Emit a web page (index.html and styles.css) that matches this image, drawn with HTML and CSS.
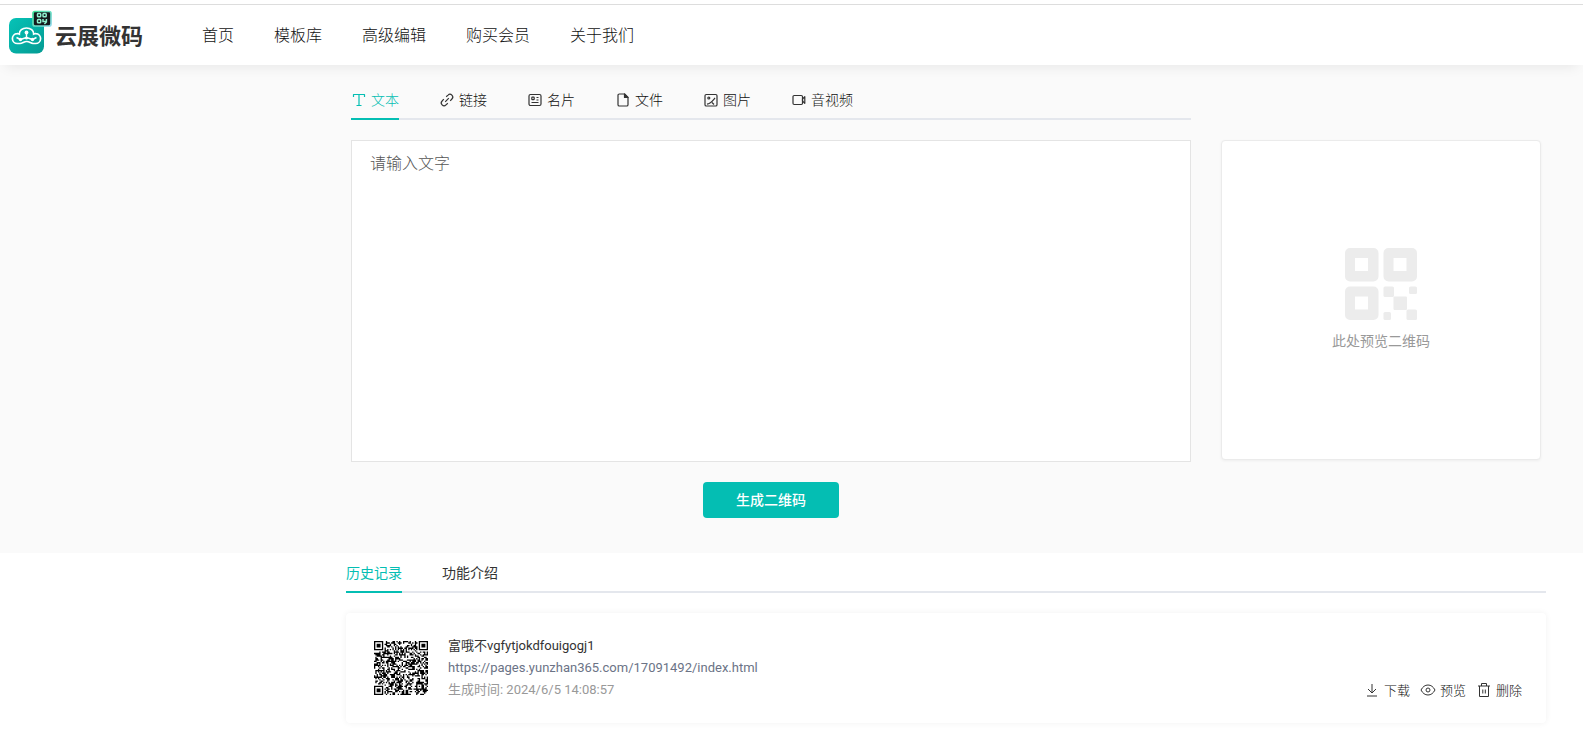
FILE: index.html
```html
<!DOCTYPE html>
<html lang="zh-CN">
<head>
<meta charset="utf-8">
<meta name="viewport" content="width=device-width, initial-scale=1">
<title>云展微码</title>
<link rel="stylesheet" href="styles.css">
</head>
<body>
<header class="header">
  <a class="brand" href="#">
    <svg class="brand-logo" viewBox="0 0 44 44" aria-hidden="true">
      <defs>
        <linearGradient id="tile" x1="0" y1="0" x2="1" y2="1"><stop offset="0" stop-color="#06c3b7"/><stop offset="1" stop-color="#049b93"/></linearGradient>
        <linearGradient id="edge" x1="0" y1="0" x2="1" y2="1"><stop offset="0" stop-color="#3fe39b"/><stop offset="1" stop-color="#8fd8e8"/></linearGradient>
      </defs>
      <rect x="0" y="8" width="35" height="35.500" rx="7" fill="url(#tile)"/>
      <path d="M11 33.500H8.500a4.900 4.900 0 0 1-.4-9.800c.8-.1 1.600.1 2.200.4-.2-3.600 3.200-6.100 7.200-6.100s7.400 2.500 7.200 6.100c.6-.3 1.400-.5 2.200-.4a4.900 4.900 0 0 1-.4 9.800H24c-2.300 0-3.500-2-6.300-2S13.500 33.500 11 33.500Z" fill="none" stroke="#fff" stroke-width="1.700"/>
      <path d="M17.500 23v6M17.500 27.500l-6 2M17.500 27.500l6 2M7.500 27.500l4 2M27.500 27.500l-4 2" fill="none" stroke="#fff" stroke-width="1.400"/>
      <g fill="#fff"><circle cx="17.500" cy="22.500" r="1.900"/><circle cx="11.500" cy="29.500" r="1.700"/><circle cx="23.500" cy="29.500" r="1.700"/><circle cx="17.500" cy="28" r="1.500"/></g>
      <rect x="24" y="1.500" width="18" height="14.500" rx="2" fill="#15191c" stroke="url(#edge)" stroke-width="1.700"/>
      <g fill="none" stroke="#8ff0cf" stroke-width="1.500"><rect x="28.500" y="3.500" width="3.200" height="3.200" rx=".8"/><rect x="34" y="3.500" width="3.200" height="3.200" rx=".8"/><rect x="28.500" y="9.500" width="3.200" height="3.200" rx=".8"/><path d="M34 9v2.500h3M37.400 9v3l-2 2"/></g>
    </svg>
    <span class="brand-name">云展微码</span>
  </a>
  <nav class="nav">
    <a href="#">首页</a>
    <a href="#">模板库</a>
    <a href="#">高级编辑</a>
    <a href="#">购买会员</a>
    <a href="#">关于我们</a>
  </nav>
</header>

<main>
  <section class="maker">
    <div class="editor">
      <div class="tabs type-tabs" role="tablist">
        <button class="tab active" type="button" role="tab" aria-selected="true"><svg class="icon" viewBox="0 0 16 16"><path d="M2.500 5V2.500h11V5M8 2.500v11M5.500 13.500h5"/></svg>文本</button>
        <button class="tab" type="button" role="tab"><svg class="icon" viewBox="0 0 16 16"><path d="M7.200 4.800 9 3.100a2.700 2.700 0 0 1 3.900 3.900L11.200 8.800M8.800 11.200 7 12.900A2.700 2.700 0 0 1 3.100 9L4.800 7.200M6.200 9.800l3.600-3.600"/></svg>链接</button>
        <button class="tab" type="button" role="tab"><svg class="icon" viewBox="0 0 16 16"><rect x="2" y="2.500" width="12" height="11" rx="1.500"/><rect x="4.800" y="5.200" width="2.400" height="2.400" rx=".6"/><path d="M9.500 5.500h2M9.500 8h2M4.500 10.500h7"/></svg>名片</button>
        <button class="tab" type="button" role="tab"><svg class="icon" viewBox="0 0 16 16"><path d="M9.500 2H4.300A1.300 1.300 0 0 0 3 3.300v9.400A1.300 1.300 0 0 0 4.300 14h7.400a1.300 1.300 0 0 0 1.300-1.300V5.500Z"/><path d="M9.500 2v3.500H13Z" class="solid"/></svg>文件</button>
        <button class="tab" type="button" role="tab"><svg class="icon" viewBox="0 0 16 16"><rect x="2" y="2.500" width="12" height="11.500" rx="1.300"/><circle cx="5.800" cy="6" r="1"/><path d="M4 12.200c3.500-.5 5-2.700 8-6.200M9 10.500l2 2"/></svg>图片</button>
        <button class="tab" type="button" role="tab"><svg class="icon" viewBox="0 0 16 16"><rect x="2" y="3.500" width="9.500" height="9" rx="1.200"/><path d="m11.500 7 2.300-2.300v6.600L11.500 9Z"/></svg>音视频</button>
      </div>
      <textarea class="text-input" aria-label="文字内容" placeholder="请输入文字"></textarea>
      <button class="generate" type="button">生成二维码</button>
    </div>
    <aside class="preview">
      <svg class="preview-icon" viewBox="0 0 72 72" aria-hidden="true">
        <path fill-rule="evenodd" d="M5 0h23.500a5 5 0 0 1 5 5v23.500a5 5 0 0 1-5 5H5a5 5 0 0 1-5-5V5a5 5 0 0 1 5-5Zm5 10v13h13V10ZM43.500 0H67a5 5 0 0 1 5 5v23.500a5 5 0 0 1-5 5H43.500a5 5 0 0 1-5-5V5a5 5 0 0 1 5-5Zm5 10v13h13V10ZM5 38.500h23.500a5 5 0 0 1 5 5V67a5 5 0 0 1-5 5H5a5 5 0 0 1-5-5V43.500a5 5 0 0 1 5-5Zm5 10v13h13v-13Z"/>
        <rect x="38.500" y="38.500" width="10.500" height="10.500" rx="1.500"/><rect x="64" y="38.500" width="8" height="7.500" rx="1.500"/><rect x="48.500" y="48.500" width="13.500" height="13.500" rx="1"/><rect x="38.500" y="64" width="7.500" height="8" rx="1.500"/><rect x="61.500" y="61.500" width="10.500" height="10.500" rx="1.500"/>
      </svg>
      <p class="preview-text">此处预览二维码</p>
    </aside>
  </section>

  <section class="history">
    <div class="tabs" role="tablist">
      <button class="tab active" type="button" role="tab" aria-selected="true">历史记录</button>
      <button class="tab" type="button" role="tab">功能介绍</button>
    </div>
    <article class="record">
      <svg class="record-code" viewBox="0 0 41 41" role="img" aria-label="二维码"><path id="code"/></svg>
      <div class="record-info">
        <h2 class="record-title">富哦不vgfytjokdfouigogj1</h2>
        <a class="record-link" href="#">https://pages.yunzhan365.com/17091492/index.html</a>
        <p class="record-time">生成时间: 2024/6/5 14:08:57</p>
      </div>
      <div class="actions">
        <button class="action" type="button"><svg class="icon" viewBox="0 0 16 16"><path d="M8 2v8.500M4 7l4 4 4-4M3 14h10"/></svg>下载</button>
        <button class="action" type="button"><svg class="icon" viewBox="0 0 16 16"><path d="M1 8c1.800-3.300 4-5 7-5s5.200 1.700 7 5c-1.800 3.300-4 5-7 5S2.800 11.300 1 8Z"/><circle cx="8" cy="8" r="2"/></svg>预览</button>
        <button class="action" type="button"><svg class="icon" viewBox="0 0 16 16"><path d="M2 4h12M5.500 4V1.500h5V4M3.500 4v10.500h9V4M6.800 7.500v4M9.300 7.500v4"/></svg>删除</button>
      </div>
    </article>
  </section>
</main>
<script src="code.js"></script>
</body>
</html>
```

FILE: styles.css
```css
* { box-sizing: border-box; }

body {
  margin: 0;
  background: #fff;
  color: #333;
  font: 14px/20px "Noto Sans", "Noto Sans CJK SC", sans-serif;
}

a { color: inherit; text-decoration: none; }
p, h2 { margin: 0; font-weight: 400; }

button {
  border: 0;
  padding: 0;
  background: none;
  color: inherit;
  font: inherit;
  cursor: pointer;
}

.header {
  position: relative;
  display: flex;
  align-items: center;
  gap: 59px;
  height: 61px;
  margin-top: 4px;
  padding-left: 9px;
  border-top: 1px solid #ddd;
  background: #fff;
  box-shadow: 0 8px 12px -6px rgba(0, 0, 0, .08);
}

.brand { display: flex; align-items: center; gap: 2px; }
.brand-logo { width: 44px; height: 44px; margin-bottom: 6px; }
.brand-name { color: #333; font-size: 22px; font-weight: 700; line-height: 32px; }

.nav { display: flex; gap: 40px; color: #111; font-size: 16px; line-height: 24px; font-weight: 300; }

.maker {
  display: flex;
  gap: 30px;
  padding: 15px 42px 35px 351px;
  background: #fafafa;
}

.editor { flex: 1; display: flex; flex-direction: column; }

.tabs {
  display: flex;
  gap: 40px;
  border-bottom: 2px solid #e4e7ed;
}

.tab {
  display: flex;
  align-items: center;
  gap: 4px;
  margin-bottom: -2px;
  padding: 10px 0 8px;
  border-bottom: 2px solid transparent;
}

.type-tabs .tab { color: #111; font-weight: 300; }
.tabs .tab.active { border-color: #04beb3; color: #04beb3; }

.icon {
  width: 16px;
  height: 16px;
  fill: none;
  stroke: #333;
  stroke-width: 1.2;
  stroke-linejoin: round;
}

.active .icon { stroke: #04beb3; }
.icon .solid { fill: #333; }

.text-input {
  display: block;
  width: 100%;
  height: 322px;
  margin-top: 20px;
  padding: 10px 18px;
  border: 1px solid #e4e4e4;
  outline: 0;
  resize: none;
  background: #fff;
  font: 300 16px/24px "Noto Sans", "Noto Sans CJK SC", sans-serif;
}

.text-input::placeholder { color: #555; }

.generate {
  align-self: center;
  width: 136px;
  height: 36px;
  margin-top: 20px;
  border-radius: 4px;
  background: #04beb3;
  color: #fff;
  font-weight: 500;
}

.preview {
  display: flex;
  flex-direction: column;
  align-items: center;
  justify-content: center;
  gap: 11px;
  width: 320px;
  height: 320px;
  margin-top: 60px;
  padding-bottom: 2px;
  border: 1px solid #ebebeb;
  border-radius: 4px;
  background: #fff;
  box-shadow: 0 1px 3px rgba(0, 0, 0, .05);
}

.preview-icon { width: 72px; height: 72px; fill: #ececec; }
.preview-text { color: #999; }

.history { padding: 10px 37px 9px 346px; }
.history .tab { padding-top: 0; }

.record {
  display: flex;
  align-items: center;
  gap: 20px;
  margin-top: 20px;
  padding: 22px 24px 22px 28px;
  border-radius: 4px;
  background: #fff;
  box-shadow: 0 0 6px rgba(0, 0, 0, .06);
  font-size: 13px;
  line-height: 22px;
}

.record-code { width: 54px; height: 54px; }
.record-info { flex: 1; font-family: Roboto, "Noto Sans CJK SC", sans-serif; }
.record-title { font-size: 13px; }
.record-link { display: block; color: #6b7386; }
.record-time { color: #999; }

.actions { display: flex; align-self: flex-end; gap: 10px; color: #111; font-weight: 300; }
.action { display: flex; align-items: center; gap: 4px; }
.action .icon { stroke-width: 1; }
```

FILE: code.js
```js
// Draws the 41-module thumbnail of the record's code.
const size = 41;
let seed = 17091492;
const next = () => {
  seed = (seed * 1103515245 + 12345) % 2147483648;
  return seed / 2147483648;
};

const ring = (x, y, cx, cy) => Math.max(Math.abs(x - cx), Math.abs(y - cy));

function dark(x, y) {
  const bit = next() < 0.5;
  for (const [cx, cy] of [[3, 3], [37, 3], [3, 37]]) {
    const d = ring(x, y, cx, cy);
    if (d <= 4) return d !== 2 && d !== 4;
  }
  const a = ring(x, y, 34, 34);
  if (a <= 2) return a !== 1;
  if (x === 6) return y % 2 === 0;
  if (y === 6) return x % 2 === 0;
  return bit;
}

let d = "";
for (let y = 0; y < size; y++) {
  for (let x = 0; x < size; x++) {
    if (dark(x, y)) d += `M${x} ${y}h1v1h-1z`;
  }
}
document.getElementById("code").setAttribute("d", d);
```
